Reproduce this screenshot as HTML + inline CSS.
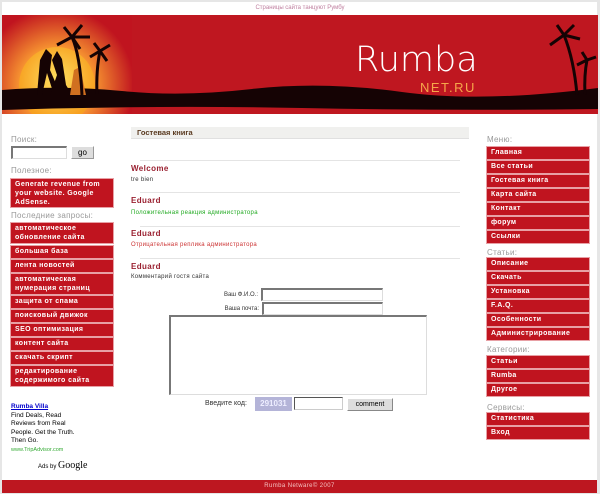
<!DOCTYPE html>
<html><head><meta charset="utf-8">
<style>
*{margin:0;padding:0;box-sizing:border-box}
body{width:600px;height:494px;background:#e6e6e6;font-family:"Liberation Sans","DejaVu Sans",sans-serif;position:relative;overflow:hidden}
#pg{position:absolute;left:2px;top:2px;width:595px;height:491px;background:#fff}
.a{position:absolute}
.lbl{position:absolute;font-size:8px;color:#999;letter-spacing:.3px}
.btn{position:absolute;background:#c0141f;color:#fff;font-size:7px;font-weight:bold;padding-left:4px;line-height:12px;letter-spacing:.4px;white-space:nowrap;border:1px solid #e8a0a5}
.btn2{line-height:9px;padding-top:1px}
.hr{position:absolute;left:140px;width:320px;height:1px;background:#e4e4e4}
.nm{position:absolute;left:131px;font-size:8px;font-weight:bold;color:#9a2030;letter-spacing:.4px}
.tx{position:absolute;left:131px;font-size:6px;letter-spacing:.3px}
.inp{position:absolute;background:#fff;border:1px solid #777;border-right-color:#ddd;border-bottom-color:#ddd;border-top:2px solid #777;border-left:2px solid #777}
</style></head><body>
<div id="pg"></div>
<div class="a" style="left:0;top:5px;width:600px;text-align:center;font-size:6px;color:#c080a0">Страницы сайта танцуют Румбу</div>
<svg class="a" style="left:2px;top:15px" width="596" height="99" viewBox="0 0 596 99">
<defs><radialGradient id="g" cx="55" cy="70" r="110" gradientUnits="userSpaceOnUse"><stop offset="0" stop-color="#ffd040"/><stop offset=".35" stop-color="#f59030"/><stop offset=".7" stop-color="#c0141f"/></radialGradient>
<radialGradient id="s" cx="55" cy="65" r="40" gradientUnits="userSpaceOnUse"><stop offset="0" stop-color="#ffe060"/><stop offset="1" stop-color="#f7a020"/></radialGradient></defs>
<rect width="596" height="99" fill="#bf1720"/>
<rect width="130" height="99" fill="url(#g)"/>
<circle cx="55" cy="70" r="38" fill="url(#s)"/>
<path d="M0 75 Q60 70 120 76 T250 74 T400 77 T596 73 V94 Q450 96 300 93 T0 95Z" fill="#150304"/>
<path d="M35 80 L38 45 L44 34 L50 40 L48 55 L58 78 L52 80 L45 58 L40 80Z" fill="#150304"/>
<path d="M50 45 L55 36 L60 44 L64 70 L70 80 L48 80 L55 60Z" fill="#150304"/>
<path d="M68 80 L72 55 L78 52 L84 80Z" fill="#d07020"/>
<path d="M80 80 Q78 40 70 22 M95 80 Q94 55 98 36" stroke="#150304" stroke-width="3" fill="none"/>
<path d="M70 22 L55 30 M70 22 L62 12 M70 22 L80 10 M70 22 L88 22 M70 22 L78 34 M98 36 L88 42 M98 36 L92 28 M98 36 L108 30 M98 36 L105 46" stroke="#150304" stroke-width="3" fill="none"/>
<path d="M575 80 Q572 45 562 20 M583 80 Q582 60 585 45" stroke="#150304" stroke-width="3" fill="none"/>
<path d="M562 20 L548 30 L562 20 L555 10 M562 20 L572 10 M562 20 L578 24 M585 45 L575 50 M585 45 L580 37 M585 45 L594 42" stroke="#150304" stroke-width="3" fill="none"/>
<text x="353" y="56" font-family="DejaVu Sans,Liberation Sans,sans-serif" font-size="35" fill="#fff" font-weight="200" style="font-weight:200">Rumba</text>
<text x="418" y="77" font-family="Liberation Sans,sans-serif" font-size="13" fill="#f6a64a" letter-spacing="1.5">NET.RU</text>
</svg>
<div class="lbl" style="left:11px;top:135px">Поиск:</div>
<div class="inp" style="left:11px;top:146px;width:56px;height:13px"></div>
<div class="a" style="left:71px;top:146px;width:23px;height:13px;background:#ddd;border:1px solid #999;border-top-color:#fff;border-left-color:#fff;font-size:8px;text-align:center;line-height:11px">go</div>
<div class="lbl" style="left:11px;top:166px">Полезное:</div>
<div class="btn btn2" style="left:10px;top:178px;width:104px;height:30px">Generate revenue from<br>your website. Google<br>AdSense.</div>
<div class="lbl" style="left:11px;top:211px">Последние запросы:</div>
<div class="btn btn2" style="left:10px;top:222px;width:104px;height:22px">автоматическое<br>обновление сайта</div>
<div class="btn" style="left:10px;top:245px;width:104px;height:14px">большая база</div>
<div class="btn" style="left:10px;top:259px;width:104px;height:14px">лента новостей</div>
<div class="btn btn2" style="left:10px;top:273px;width:104px;height:22px">автоматическая<br>нумерация страниц</div>
<div class="btn" style="left:10px;top:295px;width:104px;height:14px">защита от спама</div>
<div class="btn" style="left:10px;top:309px;width:104px;height:14px">поисковый движок</div>
<div class="btn" style="left:10px;top:323px;width:104px;height:14px">SEO оптимизация</div>
<div class="btn" style="left:10px;top:337px;width:104px;height:14px">контент сайта</div>
<div class="btn" style="left:10px;top:351px;width:104px;height:14px">скачать скрипт</div>
<div class="btn btn2" style="left:10px;top:365px;width:104px;height:22px">редактирование<br>содержимого сайта</div>
<div class="a" style="left:11px;top:403px;font-size:6.5px;line-height:8.5px;color:#000">
<span style="color:#00c;font-weight:bold;text-decoration:underline">Rumba Villa</span><br>Find Deals, Read<br>Reviews from Real<br>People. Get the Truth.<br>Then Go.<br><span style="color:#3a3;font-size:5.5px">www.TripAdvisor.com</span></div>
<div class="a" style="left:38px;top:460px;font-size:6px">Ads by <span style="font-size:10px;font-family:'Liberation Serif',serif">Google</span></div>

<div class="a" style="left:131px;top:127px;width:338px;height:12px;background:#f0f0ee;border-bottom:1px solid #e0e0e0;font-size:7.5px;font-weight:bold;color:#5a3a20;padding-left:6px;line-height:12px">Гостевая книга</div>
<div class="hr" style="top:160px"></div>
<div class="nm" style="top:164px">Welcome</div>
<div class="tx" style="top:177px;color:#333">tre bien</div>
<div class="hr" style="top:192px"></div>
<div class="nm" style="top:196px">Eduard</div>
<div class="tx" style="top:210px;color:#2a2">Положительная реакция администратора</div>
<div class="hr" style="top:226px"></div>
<div class="nm" style="top:229px">Eduard</div>
<div class="tx" style="top:242px;color:#c33">Отрицательная реплика администратора</div>
<div class="hr" style="top:258px"></div>
<div class="nm" style="top:262px">Eduard</div>
<div class="tx" style="top:274px;color:#333">Комментарий гостя сайта</div>
<div class="a" style="left:190px;top:292px;width:68px;text-align:right;font-size:6px;color:#333">Ваш Ф.И.О.:</div>
<div class="inp" style="left:261px;top:288px;width:122px;height:13px"></div>
<div class="a" style="left:190px;top:306px;width:69px;text-align:right;font-size:6px;color:#333">Ваша почта:</div>
<div class="inp" style="left:262px;top:302px;width:121px;height:13px"></div>
<div class="inp" style="left:169px;top:315px;width:258px;height:80px"></div>
<div class="a" style="left:205px;top:400px;font-size:7px;color:#333">Введите код:</div>
<div class="a" style="left:255px;top:397px;width:37px;height:14px;background:#b4b4d8;color:#eef;font-size:8px;text-align:center;line-height:14px;font-weight:bold">291031</div>
<div class="inp" style="left:294px;top:397px;width:49px;height:13px;border-width:1px 1px 1px 1px;border-color:#555 #ccc #ccc #555"></div>
<div class="a" style="left:347px;top:398px;width:46px;height:13px;background:#ddd;border:1px solid #888;border-top-color:#fff;border-left-color:#fff;font-size:7px;text-align:center;line-height:11px">comment</div>

<div class="lbl" style="left:487px;top:135px">Меню:</div>
<div class="btn" style="left:486px;top:146px;width:104px;height:14px">Главная</div>
<div class="btn" style="left:486px;top:160px;width:104px;height:14px">Все статьи</div>
<div class="btn" style="left:486px;top:174px;width:104px;height:14px">Гостевая книга</div>
<div class="btn" style="left:486px;top:188px;width:104px;height:14px">Карта сайта</div>
<div class="btn" style="left:486px;top:202px;width:104px;height:14px">Контакт</div>
<div class="btn" style="left:486px;top:216px;width:104px;height:14px">форум</div>
<div class="btn" style="left:486px;top:230px;width:104px;height:14px">Ссылки</div>
<div class="lbl" style="left:487px;top:248px">Статьи:</div>
<div class="btn" style="left:486px;top:257px;width:104px;height:14px">Описание</div>
<div class="btn" style="left:486px;top:271px;width:104px;height:14px">Скачать</div>
<div class="btn" style="left:486px;top:285px;width:104px;height:14px">Установка</div>
<div class="btn" style="left:486px;top:299px;width:104px;height:14px">F.A.Q.</div>
<div class="btn" style="left:486px;top:313px;width:104px;height:14px">Особенности</div>
<div class="btn" style="left:486px;top:327px;width:104px;height:14px">Администрирование</div>
<div class="lbl" style="left:487px;top:345px">Категории:</div>
<div class="btn" style="left:486px;top:355px;width:104px;height:14px">Статьи</div>
<div class="btn" style="left:486px;top:369px;width:104px;height:14px">Rumba</div>
<div class="btn" style="left:486px;top:383px;width:104px;height:14px">Другое</div>
<div class="lbl" style="left:487px;top:403px">Сервисы:</div>
<div class="btn" style="left:486px;top:412px;width:104px;height:14px">Статистика</div>
<div class="btn" style="left:486px;top:426px;width:104px;height:14px">Вход</div>

<div class="a" style="left:2px;top:480px;width:595px;height:13px;background:#bd1720;color:#f4c0c0;font-size:6px;text-align:center;line-height:13px;letter-spacing:.4px">Rumba Netware© 2007</div>
</body></html>
